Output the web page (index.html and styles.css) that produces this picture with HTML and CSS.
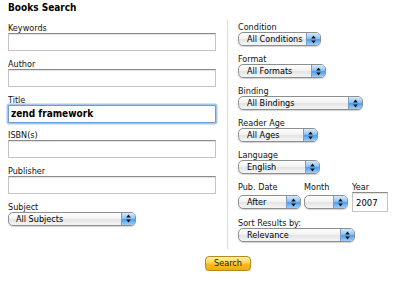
FILE: index.html
```html
<!DOCTYPE html>
<html>
<head>
<meta charset="utf-8">
<title>Books Search</title>
<link rel="stylesheet" href="styles.css">
</head>
<body>
<div class="page">
  <h1 class="heading">Books Search</h1>
  <form class="form">
    <div class="cols">
      <div class="col left">
        <div class="field"><label class="lbl">Keywords</label><input class="text" type="text"></div>
        <div class="field"><label class="lbl">Author</label><input class="text" type="text"></div>
        <div class="field"><label class="lbl">Title</label><input class="text focus" type="text" value="zend framework"></div>
        <div class="field"><label class="lbl">ISBN(s)</label><input class="text" type="text"></div>
        <div class="field"><label class="lbl">Publisher</label><input class="text" type="text"></div>
        <div class="field"><label class="lbl">Subject</label>
          <div class="sel w-subject"><span class="sel-txt">All Subjects</span><span class="sel-arr"><svg width="5" height="9" viewBox="0 0 5 9"><path d="M2.5 0.6 L4.8 3.6 H0.2 Z M0.2 5.4 H4.8 L2.5 8.4 Z" fill="#111"/></svg></span></div>
        </div>
      </div>
      <div class="col right">
        <div class="rfield"><label class="rlbl">Condition</label>
          <div class="sel w-condition"><span class="sel-txt">All Conditions</span><span class="sel-arr"><svg width="5" height="9" viewBox="0 0 5 9"><path d="M2.5 0.6 L4.8 3.6 H0.2 Z M0.2 5.4 H4.8 L2.5 8.4 Z" fill="#111"/></svg></span></div>
        </div>
        <div class="rfield"><label class="rlbl">Format</label>
          <div class="sel w-format"><span class="sel-txt">All Formats</span><span class="sel-arr"><svg width="5" height="9" viewBox="0 0 5 9"><path d="M2.5 0.6 L4.8 3.6 H0.2 Z M0.2 5.4 H4.8 L2.5 8.4 Z" fill="#111"/></svg></span></div>
        </div>
        <div class="rfield"><label class="rlbl">Binding</label>
          <div class="sel w-binding"><span class="sel-txt">All Bindings</span><span class="sel-arr"><svg width="5" height="9" viewBox="0 0 5 9"><path d="M2.5 0.6 L4.8 3.6 H0.2 Z M0.2 5.4 H4.8 L2.5 8.4 Z" fill="#111"/></svg></span></div>
        </div>
        <div class="rfield"><label class="rlbl">Reader Age</label>
          <div class="sel w-age"><span class="sel-txt">All Ages</span><span class="sel-arr"><svg width="5" height="9" viewBox="0 0 5 9"><path d="M2.5 0.6 L4.8 3.6 H0.2 Z M0.2 5.4 H4.8 L2.5 8.4 Z" fill="#111"/></svg></span></div>
        </div>
        <div class="rfield"><label class="rlbl">Language</label>
          <div class="sel w-language"><span class="sel-txt">English</span><span class="sel-arr"><svg width="5" height="9" viewBox="0 0 5 9"><path d="M2.5 0.6 L4.8 3.6 H0.2 Z M0.2 5.4 H4.8 L2.5 8.4 Z" fill="#111"/></svg></span></div>
        </div>
        <div class="rfield date-grid">
          <label class="rlbl">Pub. Date</label>
          <label class="rlbl">Month</label>
          <label class="rlbl">Year</label>
          <div class="sel w-after"><span class="sel-txt">After</span><span class="sel-arr"><svg width="5" height="9" viewBox="0 0 5 9"><path d="M2.5 0.6 L4.8 3.6 H0.2 Z M0.2 5.4 H4.8 L2.5 8.4 Z" fill="#111"/></svg></span></div>
          <div class="sel w-month"><span class="sel-txt"></span><span class="sel-arr"><svg width="5" height="9" viewBox="0 0 5 9"><path d="M2.5 0.6 L4.8 3.6 H0.2 Z M0.2 5.4 H4.8 L2.5 8.4 Z" fill="#111"/></svg></span></div>
          <input class="text year" type="text" value="2007">
        </div>
        <div class="rfield"><label class="rlbl">Sort Results by:</label>
          <div class="sel w-sort"><span class="sel-txt">Relevance</span><span class="sel-arr"><svg width="5" height="9" viewBox="0 0 5 9"><path d="M2.5 0.6 L4.8 3.6 H0.2 Z M0.2 5.4 H4.8 L2.5 8.4 Z" fill="#111"/></svg></span></div>
        </div>
      </div>
    </div>
    <div class="actions"><button class="btn" type="button">Search</button></div>
  </form>
</div>
</body>
</html>
```
FILE: styles.css
```css
html, body {
  margin: 0;
  padding: 0;
  background: #fff;
}
body {
  font-family: "DejaVu Sans Condensed", "DejaVu Sans", sans-serif;
  font-stretch: condensed;
  font-size: 9px;
  color: #000;
  overflow: hidden;
}
.page {
  padding-left: 8px;
  width: 392px;
}
.heading {
  margin: 0;
  font-size: 10px;
  font-weight: bold;
  line-height: 15px;
  height: 20px;
}
.form {
  margin: 0;
}
.cols {
  display: flex;
}
.left {
  width: 219px;
  border-right: 1px solid #dcdcdc;
  padding-top: 1px;
}
.right {
  width: 162px;
  padding: 2px 0 7px 10px;
}
.lbl {
  display: block;
  line-height: 10px;
  padding-top: 2px;
  color: #111;
}
.field {
  margin-bottom: 5.75px;
}
.text {
  display: block;
  box-sizing: border-box;
  width: 208px;
  height: 18px;
  margin: 0;
  padding: 0 2px;
  border: 1px solid #c4c4c4;
  border-top-color: #8a8a8a;
  box-shadow: inset 0 1px 1px rgba(0, 0, 0, 0.12);
  background: #fff;
  font-family: inherit;
  font-size: 9.5px;
  color: #000;
  outline: none;
}
.text.focus {
  border: 1px solid #6d9bd3;
  box-shadow: 0 0 0 1.5px #a8c6ea;
  border-radius: 1px;
  font-weight: bold;
  font-size: 10px;
  padding-left: 2px;
}
.rlbl {
  display: block;
  line-height: 10px;
  color: #111;
}
.rfield {
  margin-bottom: 8px;
}
.rfield:last-child {
  margin-bottom: 0;
}
.sel {
  display: flex;
  box-sizing: border-box;
  height: 14px;
  border: 1px solid #8e8e8e;
  border-radius: 5px;
  overflow: hidden;
  background: linear-gradient(#ffffff 0%, #f3f3f3 45%, #e4e4e4 55%, #f6f6f6 100%);
  box-shadow: 0 1px 1px rgba(0, 0, 0, 0.18);
}
.sel-txt {
  flex: 1;
  padding-left: 8px;
  line-height: 12px;
  white-space: nowrap;
  color: #000;
}
.sel-arr {
  width: 13px;
  display: flex;
  align-items: center;
  justify-content: center;
  border-left: 1px solid #7d9cc4;
  background: linear-gradient(#d6eafc 0%, #8cc3f6 45%, #4f9de9 55%, #9fd0fb 100%);
}
.w-subject { width: 128px; }
.w-subject .sel-txt { padding-left: 7px; }
.w-condition { width: 83px; }
.w-format { width: 88px; }
.w-binding { width: 125px; }
.w-age { width: 80px; }
.w-language { width: 82px; }
.w-after { width: 63px; }
.w-month { width: 44px; }
.w-sort { width: 117px; }
.date-grid {
  display: grid;
  grid-template-columns: 66px 48px 36px;
  grid-template-rows: 10px 20px;
  align-items: center;
  margin-bottom: 6px;
}
.year {
  width: 36px;
  height: 20px;
  padding-left: 3px;
  font-size: 9.5px;
}
.actions {
  display: flex;
  justify-content: center;
  padding: 7px 0 0 48px;
}
.btn {
  box-sizing: border-box;
  width: 46px;
  height: 15px;
  padding: 0;
  border: 1px solid #b4891f;
  border-radius: 4px;
  background: linear-gradient(#fff0a6 0%, #fcd54e 45%, #f7bb1f 55%, #f4ab14 100%);
  box-shadow: 0 1px 1px rgba(0, 0, 0, 0.2);
  font-family: inherit;
  font-size: 9px;
  line-height: 13px;
  color: #222;
}
```
